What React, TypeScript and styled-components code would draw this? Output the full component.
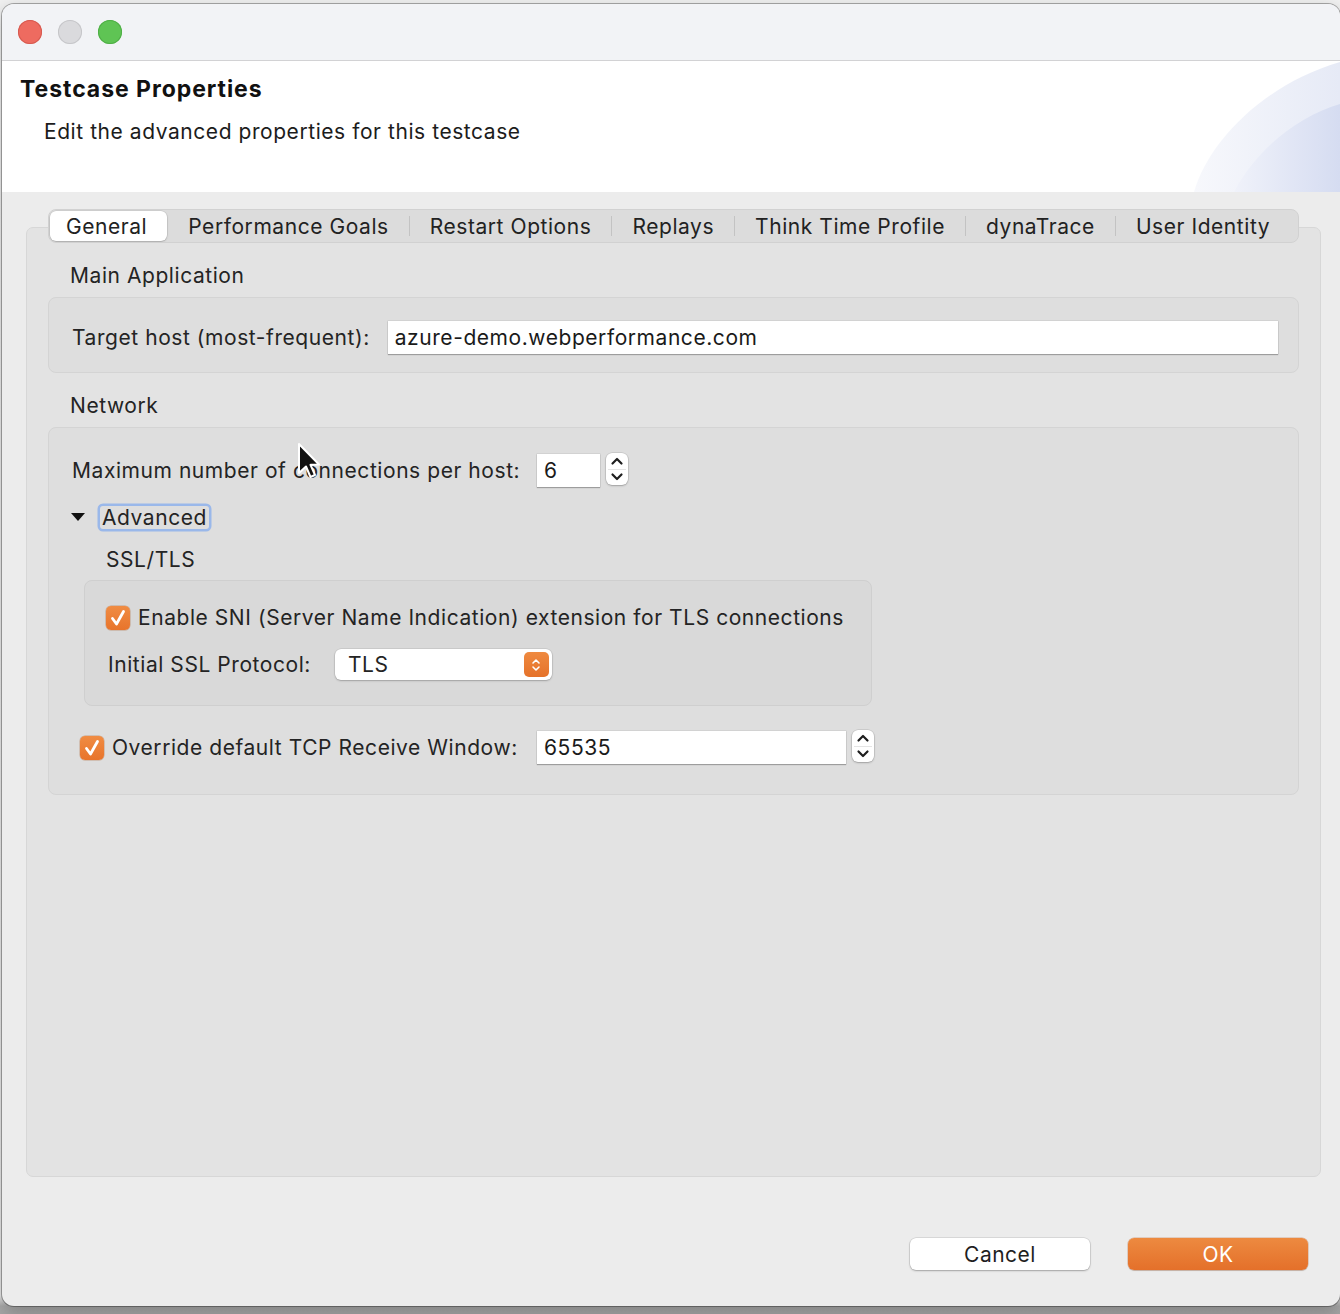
import React from 'react'
import styled, { createGlobalStyle } from 'styled-components'

const GlobalStyle = createGlobalStyle`
  html, body { margin: 0; padding: 0; }
  body {
    width: 1340px;
    height: 1314px;
    overflow: hidden;
    background: linear-gradient(to bottom, #f1f1f1 0, #e9e9e9 1296px, #ababab 1306px, #a6a6a6 100%);
    font-family: Inter, "Noto Sans", sans-serif;
    letter-spacing: 0.56px;
    color: #242424;
  }
`

const Desktop = styled.div`
  box-sizing: border-box;
  height: 1314px;
  padding: 4px 0 0 2px;
`

const Window = styled.div`
  position: relative;
  width: 1338px;
  height: 1302px;
  border-radius: 12px;
  overflow: hidden;
  background: #ececec;
  box-shadow: 0 0 0 1px rgba(0, 0, 0, 0.3), 0 6px 18px rgba(0, 0, 0, 0.25);
  display: flex;
  flex-direction: column;
`

const TitleBar = styled.div`
  flex: none;
  height: 56px;
  background: #f2f3f6;
  border-bottom: 1px solid #d2d2d4;
  display: flex;
  align-items: center;
  gap: 16px;
  padding-left: 16px;
`

const Light = styled.span<{ $color: string; $edge: string }>`
  width: 24px;
  height: 24px;
  border-radius: 50%;
  background: ${p => p.$color};
  box-shadow: inset 0 0 0 1px ${p => p.$edge};
`

const Header = styled.div`
  position: relative;
  flex: none;
  height: 131px;
  box-sizing: border-box;
  background: #fff;
  padding: 15px 18px 0;
`

const Title = styled.h1`
  margin: 0;
  font-size: 23px;
  line-height: 26px;
  letter-spacing: 0.95px;
  font-weight: 700;
  color: #111;
`

const Subtitle = styled.p`
  margin: 17px 0 0 24px;
  font-size: 21px;
  line-height: 26px;
  color: #1c1c1c;
`

const Decoration = styled.svg`
  position: absolute;
  right: 0;
  bottom: 0;
`

const Body = styled.div`
  flex: 1;
  display: flex;
  flex-direction: column;
  padding: 35px 19px 0 24px;
`

const Panel = styled.div`
  height: 950px;
  box-sizing: border-box;
  background: #e3e3e3;
  border: 1px solid #d7d7d7;
  border-radius: 7px;
  padding: 0 21px;
  display: flex;
  flex-direction: column;
`

const TabBar = styled.div`
  margin-top: -19px;
  height: 34px;
  box-sizing: border-box;
  background: #dcdcdc;
  border: 1px solid #d1d1d1;
  border-radius: 8px;
  padding: 1px;
  display: flex;
  align-items: center;
  overflow: hidden;
`

const Tab = styled.div<{ $active?: boolean }>`
  flex: none;
  white-space: nowrap;
  height: 30px;
  display: flex;
  align-items: center;
  padding: 0 ${p => (p.$active ? '20px 0 16px' : '20px')};
  font-size: 21px;
  color: #222;
  border-radius: 6px;
  background: ${p => (p.$active ? '#fff' : 'transparent')};
  box-shadow: ${p => (p.$active ? '0 0 0 0.5px rgba(0,0,0,0.12), 0 1px 2px rgba(0,0,0,0.18)' : 'none')};
`

const TabSep = styled.span<{ $hidden?: boolean }>`
  flex: none;
  width: 1px;
  height: 20px;
  background: ${p => (p.$hidden ? 'transparent' : '#c3c3c3')};
`

const SectionLabel = styled.div`
  margin: 21px 0 9px 22px;
  font-size: 21px;
  line-height: 24px;
`

const Group = styled.div`
  background: #dedede;
  border: 1px solid #d4d4d4;
  border-radius: 8px;
  padding: 23px 20px 18px 23px;
  display: flex;
  flex-direction: column;
`

const NetworkGroup = styled(Group)`
  padding-top: 26px;
  padding-bottom: 30px;
`

const Row = styled.div<{ $indent?: number; $mt?: number }>`
  display: flex;
  align-items: center;
  min-height: 24px;
  margin-left: ${p => p.$indent ?? 0}px;
  margin-top: ${p => p.$mt ?? 0}px;
`

const Label = styled.span<{ $w?: number }>`
  font-size: 21px;
  line-height: 24px;
  white-space: nowrap;
  flex: none;
  width: ${p => (p.$w ? `${p.$w}px` : 'auto')};
`

const TextField = styled.div<{ $w?: number }>`
  height: 33px;
  box-sizing: border-box;
  background: #fff;
  padding: 0 7px;
  font-size: 21px;
  line-height: 33px;
  color: #1a1a1a;
  box-shadow: 0 0 0 0.5px rgba(0, 0, 0, 0.1), 0 1px 1px rgba(0, 0, 0, 0.25);
  ${p => (p.$w ? `width: ${p.$w}px;` : 'flex: 1;')}
`

const Stepper = styled.div`
  margin-left: 6px;
  width: 22px;
  height: 32px;
  margin-top: -3px;
  border-radius: 6px;
  background: #fff;
  box-shadow: 0 0 0 0.5px rgba(0, 0, 0, 0.15), 0 1px 2px rgba(0, 0, 0, 0.22);
  display: flex;
  flex-direction: column;
  align-items: center;
  justify-content: space-between;
  padding: 3px 0;
  box-sizing: border-box;
  position: relative;
  &::after {
    content: '';
    position: absolute;
    left: 2px;
    right: 2px;
    top: 50%;
    height: 1px;
    background: #e4e4e4;
  }
`

const Disclosure = styled.span`
  width: 0;
  height: 0;
  border-left: 7px solid transparent;
  border-right: 7px solid transparent;
  border-top: 8px solid #111;
  margin: 0 15px 0 -1px;
`

const FocusLabel = styled.span`
  font-size: 21px;
  line-height: 23px;
  padding: 0 2px;
  border-radius: 3px;
  box-shadow: 0 0 0 2.5px #9ab8ea;
`

const SubBox = styled.div`
  align-self: flex-start;
  margin: 8px 0 0 12px;
  background: #d9d9d9;
  border: 1px solid #cfcfcf;
  border-radius: 8px;
  padding: 25px 27px 25px 21px;
  display: flex;
  flex-direction: column;
`

const Check = styled.span`
  flex: none;
  width: 24px;
  height: 24px;
  border-radius: 5px;
  background: linear-gradient(#f08c43, #e8742b);
  box-shadow: 0 0 0 0.5px rgba(160, 70, 10, 0.4);
  display: flex;
  align-items: center;
  justify-content: center;
  margin-right: 8px;
`

const Select = styled.div`
  margin-left: 24px;
  width: 217px;
  height: 31px;
  box-sizing: border-box;
  border-radius: 6px;
  background: #fff;
  box-shadow: 0 0 0 0.5px rgba(0, 0, 0, 0.12), 0 1px 2px rgba(0, 0, 0, 0.22);
  display: flex;
  align-items: center;
  justify-content: space-between;
  padding: 0 3px 0 13px;
  font-size: 21px;
`

const SelectArrows = styled.span`
  width: 25px;
  height: 25px;
  border-radius: 5px;
  background: linear-gradient(#ef8a40, #e5722a);
  display: flex;
  align-items: center;
  justify-content: center;
`

const Footer = styled.div`
  margin-top: auto;
  display: flex;
  justify-content: flex-end;
  gap: 38px;
  padding: 0 13px 36px 0;
`

const Button = styled.button<{ $primary?: boolean }>`
  width: 180px;
  height: 32px;
  border: none;
  border-radius: 6px;
  font-family: inherit;
  letter-spacing: 0.5px;
  font-size: 21px;
  color: ${p => (p.$primary ? '#fff' : '#1f1f1f')};
  background: ${p => (p.$primary ? 'linear-gradient(#ed8a40, #e4702a)' : '#fff')};
  box-shadow: ${p =>
    p.$primary
      ? '0 0 0 0.5px rgba(180, 80, 20, 0.4), 0 1px 1px rgba(0,0,0,0.15)'
      : '0 0 0 0.5px rgba(0,0,0,0.15), 0 1px 2px rgba(0,0,0,0.25)'};
`

const Cursor = styled.svg`
  position: absolute;
  left: 294px;
  top: 438px;
`

const Chevron = ({ up }: { up?: boolean }) => (
  <svg width="14" height="10" viewBox="0 0 14 10">
    <path
      d={up ? 'M2.5 7.5 L7 3 L11.5 7.5' : 'M2.5 2.5 L7 7 L11.5 2.5'}
      fill="none"
      stroke="#1e1e1e"
      strokeWidth="2.2"
      strokeLinecap="round"
      strokeLinejoin="round"
    />
  </svg>
)

const CheckMark = () => (
  <svg width="20" height="20" viewBox="0 0 20 20">
    <path d="M4.5 10.5 L8.5 16 L15.5 3.5" fill="none" stroke="#fff" strokeWidth="2.8" strokeLinecap="round" strokeLinejoin="round" />
  </svg>
)

const tabs = ['General', 'Performance Goals', 'Restart Options', 'Replays', 'Think Time Profile', 'dynaTrace', 'User Identity']

export default function App() {
  return (
    <>
      <GlobalStyle />
      <Desktop>
        <Window>
          <TitleBar>
            <Light $color="#ee6b60" $edge="#d65a50" />
            <Light $color="#dadadd" $edge="#c6c6c9" />
            <Light $color="#5fc454" $edge="#4fae46" />
          </TitleBar>

          <Header>
            <Title>Testcase Properties</Title>
            <Subtitle>Edit the advanced properties for this testcase</Subtitle>
            <Decoration width="146" height="130" viewBox="0 0 146 130">
              <defs>
                <linearGradient id="outer" x1="0" y1="0" x2="1" y2="0">
                  <stop offset="0" stopColor="#f7f8fc" />
                  <stop offset="1" stopColor="#e6eaf6" />
                </linearGradient>
                <linearGradient id="inner" x1="0" y1="0" x2="1" y2="0">
                  <stop offset="0" stopColor="#f0f2fa" />
                  <stop offset="1" stopColor="#d5dcf1" />
                </linearGradient>
              </defs>
              <path d="M0 130 C 14 80 70 22 146 0 L146 130 Z" fill="url(#outer)" />
              <path d="M40 130 C 62 88 104 54 146 42 L146 130 Z" fill="url(#inner)" />
            </Decoration>
          </Header>

          <Body>
            <Panel>
              <TabBar>
                {tabs.map((t, i) => (
                  <React.Fragment key={t}>
                    {i > 0 && <TabSep $hidden={i === 1} />}
                    <Tab $active={i === 0}>{t}</Tab>
                  </React.Fragment>
                ))}
              </TabBar>

              <SectionLabel>Main Application</SectionLabel>
              <Group>
                <Row>
                  <Label>Target host (most-frequent):</Label>
                  <TextField style={{ marginLeft: 18 }}>azure-demo.webperformance.com</TextField>
                </Row>
              </Group>

              <SectionLabel>Network</SectionLabel>
              <NetworkGroup>
                <Row>
                  <Label $w={465}>Maximum number of connections per host:</Label>
                  <TextField $w={63}>6</TextField>
                  <Stepper>
                    <Chevron up />
                    <Chevron />
                  </Stepper>
                </Row>

                <Row $mt={18}>
                  <Disclosure />
                  <FocusLabel>Advanced</FocusLabel>
                </Row>

                <Row $indent={34} $mt={19}>
                  <Label>SSL/TLS</Label>
                </Row>

                <SubBox>
                  <Row>
                    <Check>
                      <CheckMark />
                    </Check>
                    <Label>Enable SNI (Server Name Indication) extension for TLS connections</Label>
                  </Row>
                  <Row $mt={19}>
                    <Label style={{ marginLeft: 2 }}>Initial SSL Protocol:</Label>
                    <Select>
                      <span>TLS</span>
                      <SelectArrows>
                        <svg width="12" height="18" viewBox="0 0 12 18">
                          <path d="M3 7 L6 4 L9 7" fill="none" stroke="#fff" strokeWidth="1.6" strokeLinecap="round" strokeLinejoin="round" />
                          <path d="M3 11 L6 14 L9 11" fill="none" stroke="#fff" strokeWidth="1.6" strokeLinecap="round" strokeLinejoin="round" />
                        </svg>
                      </SelectArrows>
                    </Select>
                  </Row>
                </SubBox>

                <Row $indent={8} $mt={25}>
                  <Check>
                    <CheckMark />
                  </Check>
                  <Label $w={425}>Override default TCP Receive Window:</Label>
                  <TextField $w={309}>65535</TextField>
                  <Stepper>
                    <Chevron up />
                    <Chevron />
                  </Stepper>
                </Row>
              </NetworkGroup>
            </Panel>

            <Footer>
              <Button>Cancel</Button>
              <Button $primary>OK</Button>
            </Footer>
          </Body>

          <Cursor width="24" height="38" viewBox="0 0 24 38">
            <path d="M3 2 L3 31 L10 24.5 L14.5 35 L19 33 L14.5 22.8 L23 22.5 Z" fill="#111" stroke="#fff" strokeWidth="2" strokeLinejoin="round" />
          </Cursor>
        </Window>
      </Desktop>
    </>
  )
}
